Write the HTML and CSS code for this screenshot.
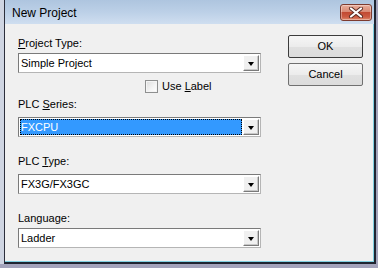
FILE: index.html
```html
<!DOCTYPE html>
<html>
<head>
<meta charset="utf-8">
<link rel="stylesheet" href="styles.css">
</head>
<body>
<div class="desk">
  <div class="window">
    <div class="titlebar">
      <span class="title">New Project</span>
      <span class="close">
        <svg width="16" height="11" viewBox="0 0 16 11">
          <path d="M3 1.5 L13 9.5 M13 1.5 L3 9.5" stroke="#5a2a22" stroke-width="4" stroke-linecap="round"/>
          <path d="M3 1.5 L13 9.5 M13 1.5 L3 9.5" stroke="#ffffff" stroke-width="2.2" stroke-linecap="round"/>
        </svg>
      </span>
    </div>
    <div class="client">
      <div class="form">
        <div class="label l1"><u>P</u>roject Type:</div>
        <div class="combo c1"><span class="value">Simple Project</span><span class="drop"><i class="tri"></i></span></div>
        <div class="checkrow"><span class="checkbox"></span><span class="checktext">Use <u>L</u>abel</span></div>
        <div class="label l2">PLC <u>S</u>eries:</div>
        <div class="combo c2"><span class="value sel"><span class="focus">FXCPU</span></span><span class="drop"><i class="tri"></i></span></div>
        <div class="label l3">PLC <u>T</u>ype:</div>
        <div class="combo c3"><span class="value">FX3G/FX3GC</span><span class="drop"><i class="tri"></i></span></div>
        <div class="label l4">Langua<u>g</u>e:</div>
        <div class="combo c4"><span class="value">Ladder</span><span class="drop"><i class="tri"></i></span></div>
      </div>
      <div class="buttons">
        <div class="btn btn-ok">OK</div>
        <div class="btn">Cancel</div>
      </div>
    </div>
  </div>
</div>
</body>
</html>
```
FILE: styles.css
```css
html, body {
  margin: 0;
  padding: 0;
}
body {
  background: #a3a3bb;
  width: 378px;
  height: 268px;
  overflow: hidden;
  font-family: "Liberation Sans", Arial, sans-serif;
  font-size: 11px;
  color: #000;
}
.desk {
  height: 264px;
  background: linear-gradient(to right, #cfd5e2 4px, transparent 4px);
}
.window {
  margin-left: 4px;
  width: 372px;
  height: 264px;
  box-sizing: border-box;
  border-left: 1px solid #2c2f3c;
  border-right: 2px solid #1e2430;
  border-bottom: 2px solid #1e2430;
  background: #f0f0f0;
  display: flex;
  flex-direction: column;
  box-shadow: inset -1px -1px 0 #7fcfe0;
}
.titlebar {
  height: 24px;
  flex: none;
  display: flex;
  align-items: flex-start;
  background: linear-gradient(to bottom, #aec5df 0%, #bcd0e7 50%, #cfdef0 100%);
  padding-left: 7px;
}
.title {
  font-size: 12px;
  line-height: 14px;
  margin-top: 6px;
  color: #000;
}
.close {
  margin-left: auto;
  margin-right: 2px;
  margin-top: 4px;
  width: 32px;
  height: 17px;
  box-sizing: border-box;
  border: 1px solid #7d3b2f;
  border-radius: 3px;
  background: linear-gradient(to bottom, #e9ad9b 0%, #d98a74 45%, #c24a32 50%, #cc5c43 80%, #e08d6e 100%);
  display: flex;
  align-items: center;
  justify-content: center;
  box-shadow: inset 0 0 0 1px rgba(255,255,255,0.35);
}
.client {
  flex: 1;
  display: flex;
  padding-left: 13px;
  box-shadow: inset -1px -1px 0 #7fcfe0;
}
.form {
  width: 243px;
  display: flex;
  flex-direction: column;
  padding-top: 13px;
}
.label {
  line-height: 13px;
  height: 13px;
}
.l2 { margin-top: 5px; }
.l3 { margin-top: 18px; }
.l4 { margin-top: 18px; }
.combo {
  height: 20px;
  box-sizing: border-box;
  border: 1px solid #7a7a7a;
  border-right-color: #b5b5b5;
  border-bottom-color: #b5b5b5;
  background: #fff;
  display: flex;
  align-items: stretch;
  padding: 1px;
}
.c1 { margin-top: 3px; }
.c2 { margin-top: 6px; }
.c3 { margin-top: 6px; }
.c4 { margin-top: 3px; }
.value {
  flex: 1;
  line-height: 16px;
  padding-left: 1px;
  white-space: nowrap;
  display: flex;
  align-items: center;
}
.value.sel {
  background: #3399ff;
  color: #fff;
  margin-right: 1px;
  padding-left: 0;
}
.focus {
  flex: 1;
  align-self: stretch;
  display: flex;
  align-items: center;
  padding-left: 1px;
  outline: 1px dotted #000;
  outline-offset: -1px;
}
.drop {
  width: 16px;
  flex: none;
  box-sizing: border-box;
  background: #f0f0f0;
  border-top: 1px solid #fff;
  border-left: 1px solid #fff;
  border-right: 1px solid #7a7a7a;
  border-bottom: 1px solid #7a7a7a;
  box-shadow: inset -1px -1px 0 #c8c8c8;
  display: flex;
  align-items: center;
  justify-content: center;
}
.tri {
  width: 0;
  height: 0;
  border-left: 3.5px solid transparent;
  border-right: 3.5px solid transparent;
  border-top: 4px solid #000;
  margin-top: 1px;
}
.checkrow {
  margin-top: 7px;
  display: flex;
  align-items: center;
  padding-left: 127px;
  height: 13px;
}
.checkbox {
  width: 13px;
  height: 13px;
  box-sizing: border-box;
  border: 1px solid #8e8f8f;
  background: linear-gradient(135deg, #dcdcdc 0%, #f4f4f4 60%, #ffffff 100%);
  box-shadow: inset 0 0 0 1px #f4f4f4;
}
.checktext {
  margin-left: 4px;
  line-height: 13px;
}
.buttons {
  margin-left: 27px;
  padding-top: 11px;
  display: flex;
  flex-direction: column;
  gap: 5px;
}
.btn {
  width: 75px;
  height: 23px;
  box-sizing: border-box;
  border: 1px solid #707070;
  border-radius: 2px;
  background: linear-gradient(to bottom, #f6f6f6 0%, #ececec 50%, #e0e0e0 52%, #dcdcdc 100%);
  display: flex;
  align-items: center;
  justify-content: center;
  line-height: 13px;
}
.btn-ok {
  border-color: #3c3c3c;
}
```
